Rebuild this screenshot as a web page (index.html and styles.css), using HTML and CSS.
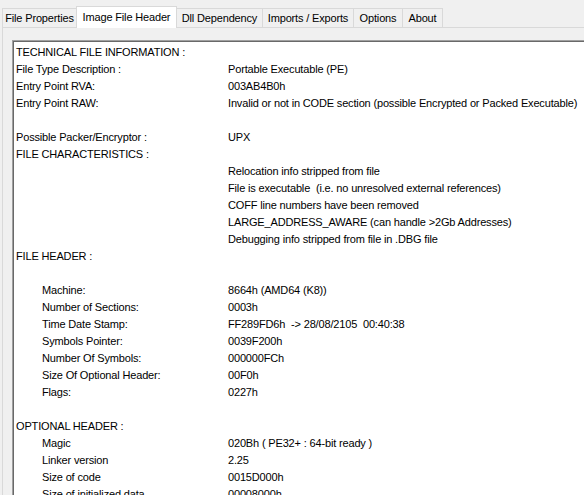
FILE: index.html
```html
<!DOCTYPE html>
<html>
<head>
<meta charset="utf-8">
<link rel="stylesheet" href="styles.css">
</head>
<body>
<div class="window">
  <div class="tabs">
    <div class="tab t-props">File Properties</div>
    <div class="tab t-header selected">Image File Header</div>
    <div class="tab t-dll">Dll Dependency</div>
    <div class="tab t-imp">Imports / Exports</div>
    <div class="tab t-opt">Options</div>
    <div class="tab t-about">About</div>
  </div>
  <div class="panel">
    <div class="textbox">
      <div class="grid">
        <div class="k">TECHNICAL FILE INFORMATION :</div><div class="v"></div>
        <div class="k">File Type Description :</div><div class="v">Portable Executable (PE)</div>
        <div class="k">Entry Point RVA:</div><div class="v">003AB4B0h</div>
        <div class="k">Entry Point RAW:</div><div class="v">Invalid or not in CODE section (possible Encrypted or Packed Executable)</div>
        <div class="k"></div><div class="v"></div>
        <div class="k">Possible Packer/Encryptor :</div><div class="v">UPX</div>
        <div class="k">FILE CHARACTERISTICS :</div><div class="v"></div>
        <div class="k"></div><div class="v">Relocation info stripped from file</div>
        <div class="k"></div><div class="v">File is executable &nbsp;(i.e. no unresolved external references)</div>
        <div class="k"></div><div class="v">COFF line numbers have been removed</div>
        <div class="k"></div><div class="v">LARGE_ADDRESS_AWARE (can handle &gt;2Gb Addresses)</div>
        <div class="k"></div><div class="v">Debugging info stripped from file in .DBG file</div>
        <div class="k">FILE HEADER :</div><div class="v"></div>
        <div class="k"></div><div class="v"></div>
        <div class="k ind">Machine:</div><div class="v">8664h (AMD64 (K8))</div>
        <div class="k ind">Number of Sections:</div><div class="v">0003h</div>
        <div class="k ind">Time Date Stamp:</div><div class="v">FF289FD6h &nbsp;-&gt; 28/08/2105 &nbsp;00:40:38</div>
        <div class="k ind">Symbols Pointer:</div><div class="v">0039F200h</div>
        <div class="k ind">Number Of Symbols:</div><div class="v">000000FCh</div>
        <div class="k ind">Size Of Optional Header:</div><div class="v">00F0h</div>
        <div class="k ind">Flags:</div><div class="v">0227h</div>
        <div class="k"></div><div class="v"></div>
        <div class="k">OPTIONAL HEADER :</div><div class="v"></div>
        <div class="k ind">Magic</div><div class="v">020Bh ( PE32+ : 64-bit ready )</div>
        <div class="k ind">Linker version</div><div class="v">2.25</div>
        <div class="k ind">Size of code</div><div class="v">0015D000h</div>
        <div class="k ind">Size of initialized data</div><div class="v">00008000h</div>
      </div>
    </div>
  </div>
</div>
</body>
</html>
```

FILE: styles.css
```css
html, body {
  margin: 0;
  padding: 0;
}
body {
  width: 584px;
  height: 495px;
  overflow: hidden;
  background: #f0f0f0;
  font-family: "Liberation Sans", Arial, sans-serif;
  font-size: 11px;
  letter-spacing: -0.16px;
  color: #000;
}
.window {
  width: 584px;
  height: 495px;
  display: flex;
  flex-direction: column;
}
.tabs {
  display: flex;
  align-items: flex-end;
  height: 27px;
  padding-left: 2px;
  position: relative;
  z-index: 1;
}
.tab {
  height: 19px;
  line-height: 18px;
  text-align: center;
  box-sizing: border-box;
  border: 1px solid #d9d9d9;
  border-bottom: none;
  margin-left: -1px;
  background: #f0f0f0;
  white-space: nowrap;
  overflow: hidden;
}
.t-props { width: 75px; margin-left: 0; }
.t-header { width: 101px; }
.t-dll { width: 87px; }
.t-imp { width: 92px; }
.t-opt { width: 50px; }
.t-about { width: 41px; }
.tab.selected {
  height: 22px;
  line-height: 20px;
  margin-bottom: -1px;
  background: #fff;
  position: relative;
  z-index: 2;
}
.panel {
  flex: 1;
  margin-left: 2px;
  border-top: 1px solid #d9d9d9;
  border-left: 1px solid #d9d9d9;
  padding: 12px 0 0 9px;
  background: #f0f0f0;
  overflow: hidden;
}
.textbox {
  background: #fff;
  border-top: 1px solid #a0a0a0;
  border-left: 1px solid #a0a0a0;
  box-shadow: inset 1px 1px 0 #696969;
  padding: 3px 0 0 3px;
  height: 600px;
  width: 700px;
}
.grid {
  display: grid;
  grid-template-columns: 212px auto;
  grid-auto-rows: 17px;
  line-height: 17px;
  white-space: nowrap;
}
.k.ind {
  padding-left: 26px;
}
```
